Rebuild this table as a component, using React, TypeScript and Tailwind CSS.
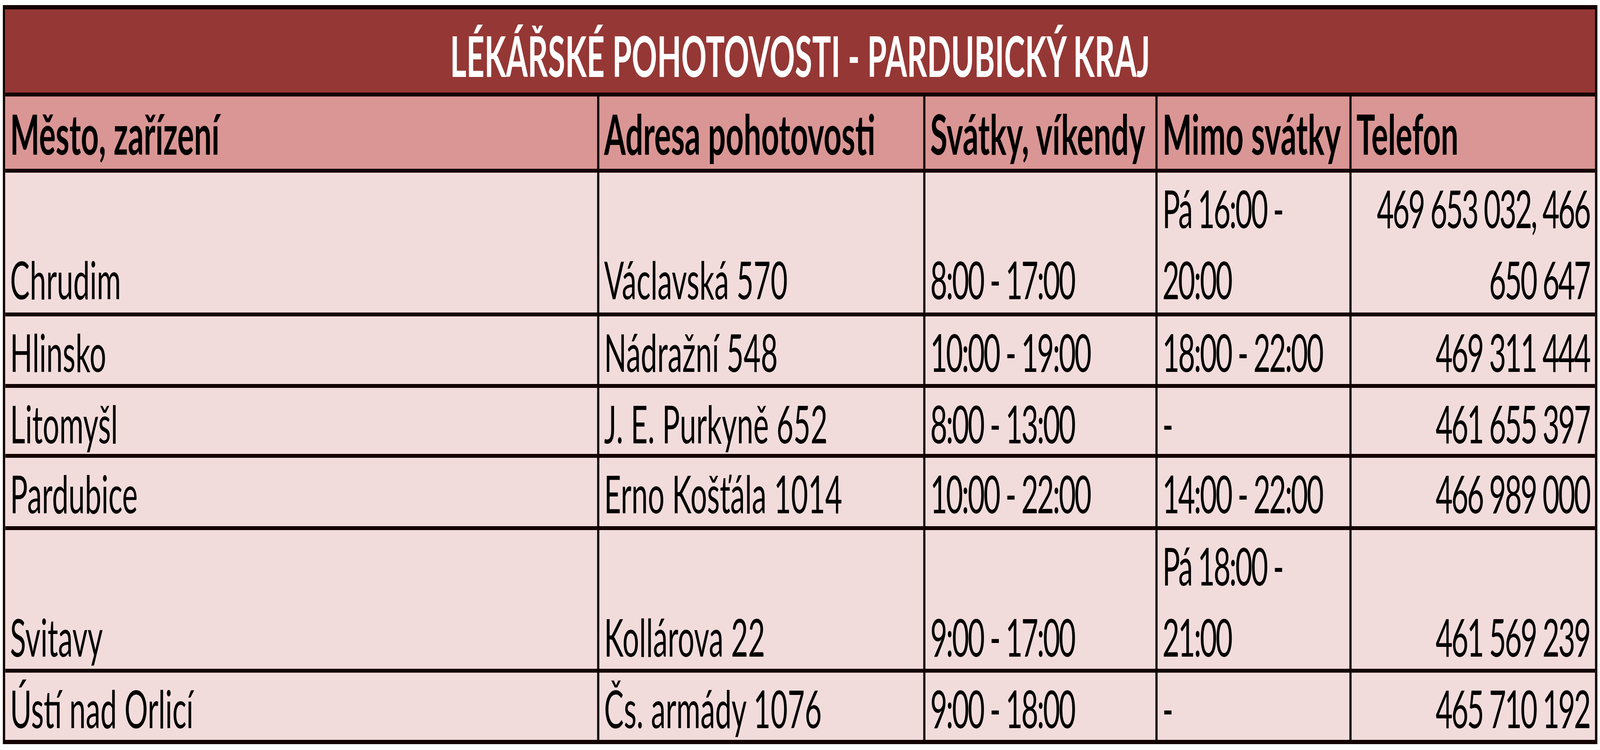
import React, { useEffect, useState } from 'react';

type Row = {
  city: string;
  address: string;
  holidays: string;
  weekdays: string[];
  phone: string[];
  height: string;
  last?: boolean;
};

const rows: Row[] = [
  { city: 'Chrudim', address: 'Václavská 570', holidays: '8:00 - 17:00', weekdays: ['Pá 16:00 -', '20:00'], phone: ['469 653 032, 466', '650 647'], height: 'h-[368px]' },
  { city: 'Hlinsko', address: 'Nádražní 548', holidays: '10:00 - 19:00', weekdays: ['18:00 - 22:00'], phone: ['469 311 444'], height: 'h-[183px]' },
  { city: 'Litomyšl', address: 'J. E. Purkyně 652', holidays: '8:00 - 13:00', weekdays: ['-'], phone: ['461 655 397'], height: 'h-[179px]' },
  { city: 'Pardubice', address: 'Erno Košťála 1014', holidays: '10:00 - 22:00', weekdays: ['14:00 - 22:00'], phone: ['466 989 000'], height: 'h-[185px]' },
  { city: 'Svitavy', address: 'Kollárova 22', holidays: '9:00 - 17:00', weekdays: ['Pá 18:00 -', '21:00'], phone: ['461 569 239'], height: 'h-[365px]' },
  { city: 'Ústí nad Orlicí', address: 'Čs. armády 1076', holidays: '9:00 - 18:00', weekdays: ['-'], phone: ['465 710 192'], height: 'h-[172px]', last: true },
];

// the sheet is drawn for a 7291px wide page
const PAGE_W = 7291;

const cols = 'grid grid-cols-[2707px_1486px_1058px_884px_1109px]';
const cell = 'flex flex-col justify-end border-r-[10px] border-[#140202] pl-[22px] whitespace-nowrap';

const Lines: React.FC<{ lines: string[] }> = ({ lines }) => (
  <>
    {lines.map((l) => (
      <div key={l}>{l}</div>
    ))}
  </>
);

export default function App() {
  const [scale, setScale] = useState(() => (typeof window === 'undefined' ? 1 : window.innerWidth / PAGE_W));

  useEffect(() => {
    const onResize = () => setScale(window.innerWidth / PAGE_W);
    onResize();
    window.addEventListener('resize', onResize);
    return () => window.removeEventListener('resize', onResize);
  }, []);

  return (
    <div className="w-screen min-h-screen overflow-hidden bg-white">
      <div
        className="w-[7291px] origin-top-left pt-[13px] pl-[13px] font-[Lato,sans-serif] text-black"
        style={{ transform: `scaleX(${scale})` }}
      >
        <div className="w-[7266px] border-[11px] border-[#140202]">
          {/* title */}
          <div className="h-[223px] bg-[#953735] border-b-[10px] border-[#140202] flex items-end justify-center pb-[4px]">
            <h1 className="text-[143px] leading-[182px] font-bold text-white">LÉKÁŘSKÉ POHOTOVOSTI - PARDUBICKÝ KRAJ</h1>
          </div>

          {/* header */}
          <div className={`${cols} h-[195px] bg-[#da9694] border-b-[10px] border-[#140202] text-[142px] leading-[182px] font-bold`}>
            <div className={cell}>Město, zařízení</div>
            <div className={cell}>Adresa pohotovosti</div>
            <div className={cell}>Svátky, víkendy</div>
            <div className={cell}>Mimo svátky</div>
            <div className="flex flex-col justify-end pl-[22px] whitespace-nowrap">Telefon</div>
          </div>

          {rows.map((r) => (
            <div
              key={r.city}
              className={`${cols} ${r.height} bg-[#f2dcdb] text-[134px] leading-[182px] ${r.last ? '' : 'border-b-[10px] border-[#140202]'}`}
            >
              <div className={cell}>{r.city}</div>
              <div className={cell}>{r.address}</div>
              <div className={`${cell} tracking-[-6px]`}>{r.holidays}</div>
              <div className={`${cell} tracking-[-6px]`}>
                <Lines lines={r.weekdays} />
              </div>
              <div className="flex flex-col justify-end items-end pr-[24px] whitespace-nowrap tracking-[-6px]">
                <Lines lines={r.phone} />
              </div>
            </div>
          ))}
        </div>
      </div>
    </div>
  );
}
